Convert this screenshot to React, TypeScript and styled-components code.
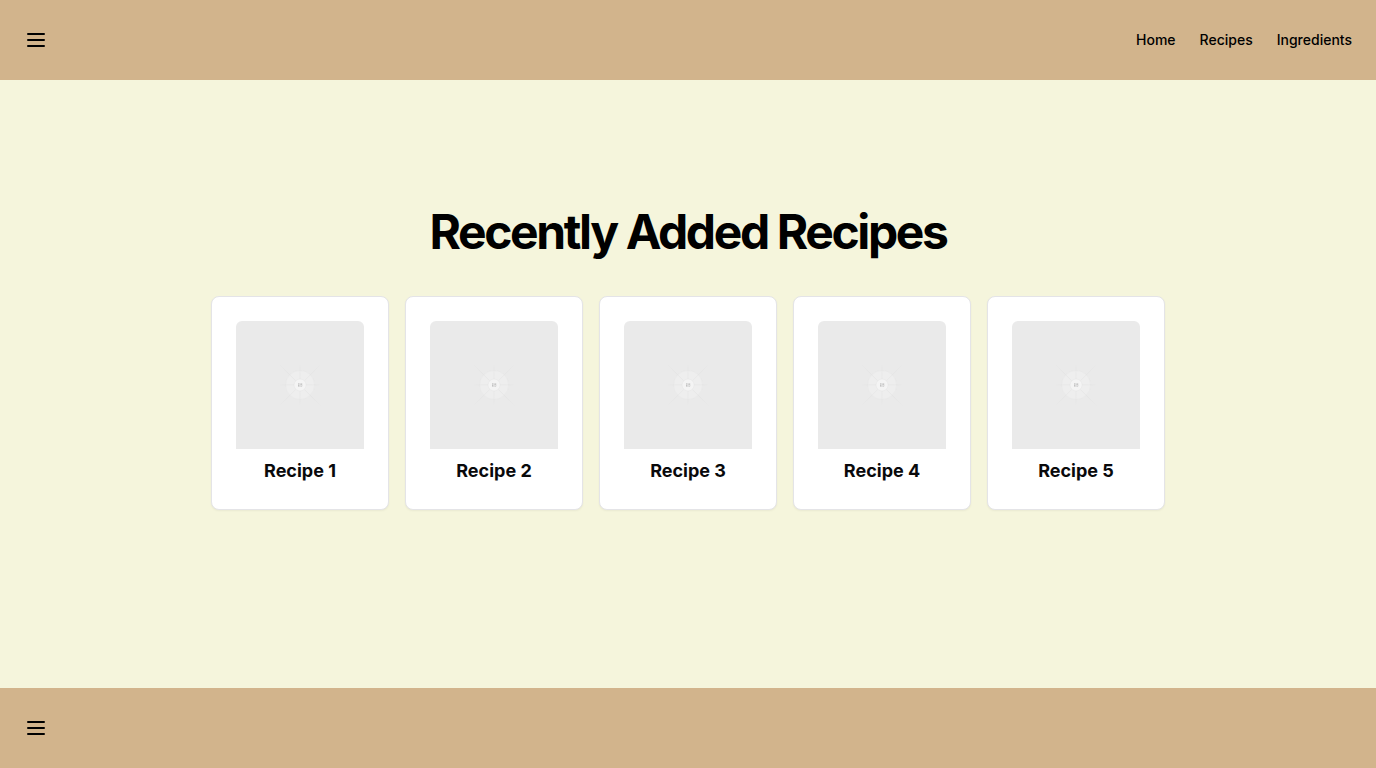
import React from "react";
import styled, { createGlobalStyle } from "styled-components";

const GlobalStyle = createGlobalStyle`
  *, *::before, *::after { box-sizing: border-box; }
  body { margin: 0; font-family: Inter, "Liberation Sans", sans-serif; color: #09090b; background: #fff; line-height: 1.5; }
  h1, h2 { margin: 0; }
`;

const Page = styled.div`
  display: flex;
  flex-direction: column;
  min-height: 100vh;
`;

const barStyles = `
  display: flex;
  align-items: center;
  justify-content: space-between;
  height: 80px;
  padding: 0 24px;
  background: #d2b48c;
`;

const Header = styled.header`${barStyles}`;
const Footer = styled.footer`${barStyles}`;

const MenuButton = styled.button`
  display: flex;
  padding: 0;
  border: 0;
  background: none;
  color: #000;
`;

const Nav = styled.nav`
  display: flex;
  gap: 24px;
`;

const NavLink = styled.a`
  font-size: 14px;
  line-height: 20px;
  font-weight: 500;
  color: #000;
  text-decoration: none;
`;

const Main = styled.main`
  flex: 1;
  display: flex;
  flex-direction: column;
  align-items: center;
  padding-top: 128px;
  background: #f5f5dc;
`;

const Title = styled.h1`
  font-size: 48px;
  line-height: 48px;
  font-weight: 700;
  letter-spacing: -0.05em;
  color: #000;
`;

const CardGrid = styled.div`
  display: grid;
  grid-template-columns: repeat(5, 178px);
  gap: 16px;
  margin-top: 40px;
`;

const Card = styled.article`
  height: 214px;
  padding: 24px;
  border: 1px solid #e4e4e7;
  border-radius: 8px;
  background: #fff;
  box-shadow: 0 1px 2px rgba(0, 0, 0, 0.05);
`;

const Thumb = styled.div`
  height: 128px;
  overflow: hidden;
  border-radius: 6px 6px 0 0;
  background: #eaeaea;

  svg { display: block; }
`;

const CardTitle = styled.h2`
  margin-top: 8px;
  font-size: 18px;
  line-height: 28px;
  font-weight: 700;
  text-align: center;
`;

const MenuIcon = () => (
  <svg width="24" height="24" viewBox="0 0 24 24" fill="none" stroke="currentColor" strokeWidth="2" strokeLinecap="round">
    <path d="M4 6h16M4 12h16M4 18h16" />
  </svg>
);

const fadeStops = (
  <>
    <stop stopColor="#c9c9c9" stopOpacity="0" />
    <stop offset=".208" stopColor="#c9c9c9" />
    <stop offset=".792" stopColor="#c9c9c9" />
    <stop offset="1" stopColor="#c9c9c9" stopOpacity="0" />
  </>
);

const PlaceholderArt = ({ id }: { id: string }) => (
  <svg width="128" height="128" viewBox="0 0 1200 1200" fill="none">
    <defs>
      <linearGradient id={`${id}-h`} x1="404" y1="0" x2="797" y2="0" gradientUnits="userSpaceOnUse">{fadeStops}</linearGradient>
      <linearGradient id={`${id}-v`} x1="0" y1="404" x2="0" y2="796" gradientUnits="userSpaceOnUse">{fadeStops}</linearGradient>
      <linearGradient id={`${id}-d`} x1="404" y1="405" x2="796" y2="797" gradientUnits="userSpaceOnUse">{fadeStops}</linearGradient>
      <linearGradient id={`${id}-u`} x1="404" y1="797" x2="796" y2="405" gradientUnits="userSpaceOnUse">{fadeStops}</linearGradient>
    </defs>
    <g opacity=".5">
      <g opacity=".5">
        <circle cx="600.7" cy="599.9" r="136.6" fill="#fafafa" />
        <circle cx="600.7" cy="599.9" r="135.4" stroke="#c9c9c9" strokeWidth="2.418" />
      </g>
      <g strokeWidth="2.418">
        <path stroke={`url(#${id}-u)`} d="M404.3 796.6 795.7 405.2" />
        <path stroke={`url(#${id}-h)`} d="M404.8 598.7h391.7" />
        <path stroke={`url(#${id}-v)`} d="M599.5 795.7V404" />
        <path stroke={`url(#${id}-d)`} d="m795.7 796.6-391.4-391.4" />
      </g>
      <circle cx="600.7" cy="599.9" r="56.8" fill="#fff" />
      <path
        fill="#666"
        fillRule="evenodd"
        d="M616.426 586.58h-31.434v16.176l3.553-3.554.531-.531h9.068l.074-.074 8.463-8.463h2.565l7.18 7.181V586.58Zm-15.715 14.654 3.698 3.699 1.283 1.282-2.565 2.565-1.282-1.283-5.2-5.199h-6.066l-5.514 5.514-.073.073v2.876a2.418 2.418 0 0 0 2.418 2.418h26.598a2.418 2.418 0 0 0 2.418-2.418v-8.317l-8.463-8.463-7.181 7.181-.071.072Zm-19.347 5.442v4.085a6.045 6.045 0 0 0 6.046 6.045h26.598a6.044 6.044 0 0 0 6.045-6.045v-7.108l1.356-1.355-1.282-1.283-.074-.073v-17.989h-38.689v23.43l-.146.146.146.147Z"
      />
      <circle cx="600.7" cy="599.9" r="55.6" stroke="#c9c9c9" strokeWidth="2.418" />
    </g>
  </svg>
);

const recipes = ["Recipe 1", "Recipe 2", "Recipe 3", "Recipe 4", "Recipe 5"];
const links = ["Home", "Recipes", "Ingredients"];

export default function App() {
  return (
    <Page>
      <GlobalStyle />
      <Header>
        <MenuButton aria-label="Menu"><MenuIcon /></MenuButton>
        <Nav>{links.map((l) => <NavLink key={l} href="#">{l}</NavLink>)}</Nav>
      </Header>
      <Main>
        <Title>Recently Added Recipes</Title>
        <CardGrid>
          {recipes.map((name, i) => (
            <Card key={name}>
              <Thumb><PlaceholderArt id={`art${i}`} /></Thumb>
              <CardTitle>{name}</CardTitle>
            </Card>
          ))}
        </CardGrid>
      </Main>
      <Footer>
        <MenuButton aria-label="Menu"><MenuIcon /></MenuButton>
      </Footer>
    </Page>
  );
}
